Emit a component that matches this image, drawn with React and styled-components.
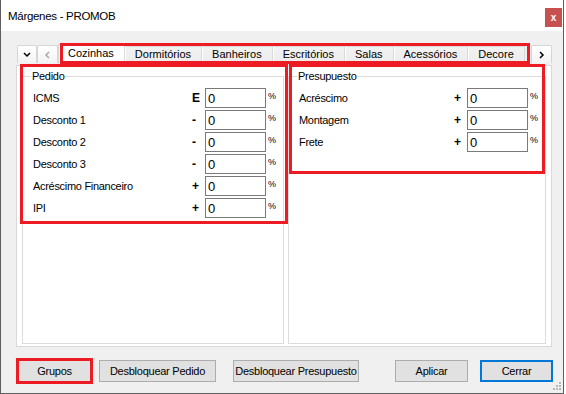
import React from 'react'
import styled, { createGlobalStyle } from 'styled-components'

const GlobalStyle = createGlobalStyle`
	html, body {
		margin: 0;
		padding: 0;
		background: #ffffff;
	}
	body {
		font-family: "Liberation Sans", Arial, sans-serif;
	}
	* {
		box-sizing: border-box;
	}
`

const RED = '#ed1c24'

const Window = styled.div`
	position: relative;
	width: 564px;
	height: 394px;
	display: flex;
	flex-direction: column;
	background: #f0f0f0;
	border: 1px solid #5f5f5f;
	border-top: none;
`

const TitleBar = styled.div`
	flex: none;
	height: 31px;
	display: flex;
	justify-content: space-between;
	background: #ffffff;
	padding: 0 1px 0 7px;
`

const Title = styled.span`
	align-self: center;
	font-size: 11.5px;
	letter-spacing: -0.3px;
	color: #000;
`

const CloseButton = styled.button`
	margin-top: 8px;
	width: 17px;
	height: 19px;
	padding: 0;
	border: none;
	background: #c75050;
	color: #fff;
	font: bold 10px "Liberation Sans", Arial, sans-serif;
	line-height: 17px;
`

const Body = styled.div`
	flex: 1;
	display: flex;
	flex-direction: column;
	padding: 13px 11px 0 15px;
`

const TabStrip = styled.div`
	display: flex;
	height: 21px;
	padding-left: 1px;
`

const ScrollButton = styled.button`
	flex: none;
	width: ${(p) => p.$width || 20}px;
	height: 18px;
	margin-top: 1px;
	padding: 0;
	display: flex;
	align-items: center;
	justify-content: center;
	background: linear-gradient(#ffffff, #f3f3f3);
	border: 1px solid #d6d6d6;
	border-bottom: none;
	border-radius: 2px 2px 0 0;
	color: ${(p) => (p.$disabled ? '#a8a8a8' : '#000')};
`

const TabList = styled.div`
	position: relative;
	flex: 1;
	min-width: 0;
	display: flex;
	align-items: flex-end;
`

const Tab = styled.div`
	flex: 0 1 auto;
	overflow: hidden;
	white-space: nowrap;
	height: ${(p) => (p.$active ? 21 : 19)}px;
	display: flex;
	align-items: center;
	padding: 0 10px 4px 9px;
	font-size: 11px;
	color: #000;
	background: ${(p) => (p.$active ? '#ffffff' : 'linear-gradient(#f2f2f2, #ebebeb)')};
	border: 1px solid #d9d9d9;
	border-bottom: none;
	border-left-color: ${(p) => (p.$first ? '#d9d9d9' : '#ffffff')};
`

const Highlight = styled.div`
	position: absolute;
	top: ${(p) => p.$top}px;
	left: ${(p) => p.$left}px;
	width: ${(p) => p.$width}px;
	height: ${(p) => p.$height}px;
	border: 3px solid ${RED};
	pointer-events: none;
	z-index: 5;
`

const Panel = styled.div`
	height: 282px;
	display: grid;
	grid-template-columns: 262px 1fr;
	column-gap: 4px;
	padding: 4px 5px 2px 5px;
	background: #ffffff;
	border: 1px solid #d9d9d9;
`

const GroupCell = styled.div`
	position: relative;
	height: 274px;
`

const GroupBox = styled.fieldset`
	height: 100%;
	min-width: 0;
	margin: 0;
	padding: 0 3px 0 10px;
	border: 1px solid #dcdcdc;
`

const Legend = styled.legend`
	margin-left: -2px;
	padding: 0 1px;
	font-size: 11px;
	line-height: 13px;
	letter-spacing: -0.3px;
	color: #000;
`

const Rows = styled.div`
	display: grid;
	grid-template-columns: 1fr 14px 61px 14px;
	grid-auto-rows: 20px;
	row-gap: 2px;
	margin-top: 5px;
	align-items: center;
`

const Label = styled.span`
	font-size: 11px;
	letter-spacing: -0.3px;
	color: #000;
`

const Sign = styled.span`
	padding-left: 1px;
	font-size: 12px;
	font-weight: bold;
	color: #000;
`

const ValueInput = styled.input`
	width: 100%;
	height: 20px;
	padding: 0 0 0 2px;
	border: 1px solid #7a7a7a;
	background: #fff;
	font: 13px "Liberation Sans", Arial, sans-serif;
	color: #000;
	outline: none;
`

const Percent = styled.span`
	align-self: start;
	margin-top: 3px;
	padding-left: 2px;
	font-size: 9px;
	color: #000;
`

const ButtonBar = styled.div`
	display: flex;
	align-items: center;
	height: 26px;
	margin-top: 11px;
`

const Button = styled.button`
	flex: none;
	width: ${(p) => p.$width}px;
	height: ${(p) => (p.$highlight ? 26 : 22)}px;
	margin-left: ${(p) => p.$gap || 0}px;
	padding: 0;
	background: #e1e1e1;
	border: ${(p) =>
		p.$highlight ? `3px solid ${RED}` : p.$default ? '2px solid #0078d7' : '1px solid #adadad'};
	font: 11px "Liberation Sans", Arial, sans-serif;
	letter-spacing: -0.25px;
	color: #000;
	white-space: nowrap;
`

const SizeGrip = styled.svg`
	position: absolute;
	right: 1px;
	bottom: 2px;
`

const Chevron = ({ dir }) => {
	const paths = {
		down: 'M1 2 L4 5 L7 2',
		left: 'M5 1 L2 4 L5 7',
		right: 'M2 1 L5 4 L2 7',
	}
	const size = dir === 'down' ? [8, 7] : [7, 8]
	return (
		<svg width={size[0]} height={size[1]} viewBox={`0 0 ${size[0]} ${size[1]}`}>
			<path d={paths[dir]} fill="none" stroke="currentColor" strokeWidth="1.5" />
		</svg>
	)
}

const tabs = ['Cozinhas', 'Dormitórios', 'Banheiros', 'Escritórios', 'Salas', 'Acessórios', 'Decore']

const pedido = [
	{ label: 'ICMS', sign: 'E' },
	{ label: 'Desconto 1', sign: '-' },
	{ label: 'Desconto 2', sign: '-' },
	{ label: 'Desconto 3', sign: '-' },
	{ label: 'Acréscimo Financeiro', sign: '+' },
	{ label: 'IPI', sign: '+' },
]

const presupuesto = [
	{ label: 'Acréscimo', sign: '+' },
	{ label: 'Montagem', sign: '+' },
	{ label: 'Frete', sign: '+' },
]

const FieldRows = ({ items }) => (
	<Rows>
		{items.map((item) => (
			<React.Fragment key={item.label}>
				<Label>{item.label}</Label>
				<Sign>{item.sign}</Sign>
				<ValueInput defaultValue="0" />
				<Percent>%</Percent>
			</React.Fragment>
		))}
	</Rows>
)

export default function App() {
	return (
		<>
			<GlobalStyle />
			<Window>
				<TitleBar>
					<Title>Márgenes - PROMOB</Title>
					<CloseButton>x</CloseButton>
				</TitleBar>
				<Body>
					<TabStrip>
						<ScrollButton $width={20}>
							<Chevron dir="down" />
						</ScrollButton>
						<ScrollButton $width={21} $disabled>
							<Chevron dir="left" />
						</ScrollButton>
						<TabList>
							{tabs.map((t, i) => (
								<Tab key={t} $active={i === 0} $first={i === 0}>
									{t}
								</Tab>
							))}
							<Highlight $top={-1} $left={2} $width={470} $height={21} />
						</TabList>
						<ScrollButton $width={21}>
							<Chevron dir="right" />
						</ScrollButton>
					</TabStrip>
					<Panel>
						<GroupCell>
							<GroupBox>
								<Legend>Pedido</Legend>
								<FieldRows items={pedido} />
							</GroupBox>
							<Highlight $top={-6} $left={-2} $width={268} $height={160} />
						</GroupCell>
						<GroupCell>
							<GroupBox>
								<Legend>Presupuesto</Legend>
								<FieldRows items={presupuesto} />
							</GroupBox>
							<Highlight $top={-6} $left={1} $width={256} $height={110} />
						</GroupCell>
					</Panel>
					<ButtonBar>
						<Button $width={77} $highlight>
							Grupos
						</Button>
						<Button $width={117} $gap={6}>
							Desbloquear Pedido
						</Button>
						<Button $width={126} $gap={17}>
							Desbloquear Presupuesto
						</Button>
						<Button $width={73} $gap={36}>
							Aplicar
						</Button>
						<Button $width={73} $gap={12} $default>
							Cerrar
						</Button>
					</ButtonBar>
				</Body>
				<SizeGrip width="10" height="10" viewBox="0 0 10 10">
					{[
						[7, 1],
						[7, 4],
						[4, 4],
						[7, 7],
						[4, 7],
						[1, 7],
					].map(([x, y]) => (
						<rect key={`${x}-${y}`} x={x} y={y} width="2" height="2" fill="#b8b8b8" />
					))}
				</SizeGrip>
			</Window>
		</>
	)
}
